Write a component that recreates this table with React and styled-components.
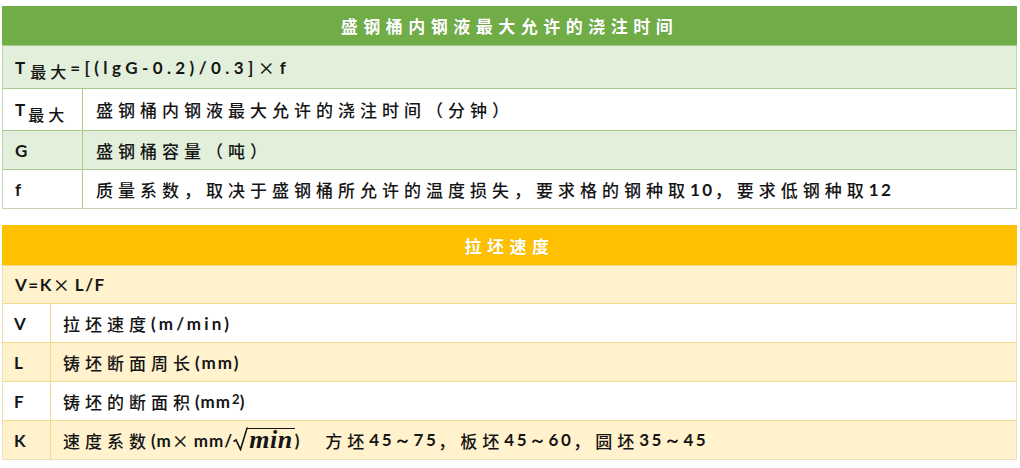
import React from "react";
import styled, { createGlobalStyle } from "styled-components";

const Global = createGlobalStyle`
  html, body { margin: 0; padding: 0; background: #ffffff; }
  body { font-family: "Noto Sans CJK SC", "Noto Sans", sans-serif; color: #151515; }
`;

const Page = styled.div`
  padding: 6px 0 0 2px;
  display: flex;
  flex-direction: column;
  gap: 16px;
  width: 1015px;
`;

const Table = styled.section`
  width: 1015px;
  box-sizing: border-box;
  border: 1px solid ${(p) => p.$outer};
  border-top: none;
  display: flex;
  flex-direction: column;
`;

const Title = styled.div`
  height: ${(p) => p.$h}px;
  background: ${(p) => p.$bg};
  color: #ffffff;
  display: flex;
  align-items: center;
  justify-content: center;
  font-size: 17px;
  font-weight: 700;
  letter-spacing: 5.5px;
  margin: 0 -1px;
  text-shadow: 0 0 1px rgba(0, 0, 0, 0.15);
`;

const Row = styled.div`
  display: grid;
  grid-template-columns: ${(p) => (p.$key ? `${p.$key}px 1fr` : "1fr")};
  height: ${(p) => p.$h}px;
  box-sizing: border-box;
  background: ${(p) => p.$bg};
  border-top: 1px solid ${(p) => p.$line};
  font-size: 17px;
  font-weight: 500;
  letter-spacing: 5px;
`;

const Cell = styled.div`
  display: flex;
  align-items: center;
  padding-left: ${(p) => p.$pad}px;
  white-space: nowrap;
  border-right: ${(p) => (p.$divider ? `1px solid ${p.$divider}` : "none")};
`;

const Lat = styled.span`
  font-family: "Lato", "Noto Sans", sans-serif;
  font-weight: 700;
  letter-spacing: ${(p) => (p.$ls != null ? p.$ls : 2)}px;
`;

const Sub = styled.span`
  font-size: 16px;
  position: relative;
  top: 4px;
  margin-left: 3px;
  letter-spacing: 4px;
`;

const Sup = styled.sup`
  font-family: "Lato", sans-serif;
  font-weight: 700;
  font-size: 13px;
  letter-spacing: 0;
  position: relative;
  top: -2px;
  margin-left: 1px;
`;

const Root = styled.span`
  display: inline-flex;
  align-items: flex-end;
  height: 26px;
  margin-top: -5px;
  letter-spacing: 0;
`;

const RadicalSvg = styled.svg`
  display: block;
  width: 15px;
  height: 24px;
`;

const Radicand = styled.span`
  font-family: "Liberation Serif", serif;
  font-style: italic;
  font-weight: 700;
  font-size: 26px;
  line-height: 22px;
  border-top: 1.5px solid #151515;
  padding: 0 2px 0 1px;
  letter-spacing: 0.5px;
`;

const Gap = styled.span`
  display: inline-block;
  width: ${(p) => p.$w}px;
`;

const green = {
  head: "#70AD47",
  band: "#E2EFDA",
  line: "#A9C98F",
  outer: "#C5D6B6",
};

const amber = {
  head: "#FFC000",
  band: "#FFF2CC",
  line: "#F2DB8E",
  outer: "#E9DFBC",
};

function Sqrt({ children }) {
  return (
    <Root>
      <RadicalSvg viewBox="0 0 15 24">
        <path
          d="M0.5 14.5 L3 13 L7.5 22.5 L14 1.2 L15 1.2"
          fill="none"
          stroke="#151515"
          strokeWidth="1.6"
          strokeLinejoin="miter"
        />
      </RadicalSvg>
      <Radicand>{children}</Radicand>
    </Root>
  );
}

export default function App() {
  return (
    <>
      <Global />
      <Page>
        <Table $outer={green.outer}>
          <Title $h={39} $bg={green.head}>盛钢桶内钢液最大允许的浇注时间</Title>
          <Row $h={43} $bg={green.band} $line={green.line}>
            <Cell $pad={12}>
              <Lat $ls={2}>T</Lat>
              <Sub>最大</Sub>
              <Lat $ls={4.4}>=[(lgG-0.2)/0.3]</Lat>
              <span>×</span>
              <Lat $ls={4}>f</Lat>
            </Cell>
          </Row>
          <Row $key={80} $h={42} $bg="#ffffff" $line={green.line}>
            <Cell $pad={12} $divider={green.line}>
              <Lat $ls={0}>T</Lat>
              <Sub>最大</Sub>
            </Cell>
            <Cell $pad={13}>盛钢桶内钢液最大允许的浇注时间（分钟）</Cell>
          </Row>
          <Row $key={80} $h={39} $bg={green.band} $line={green.line}>
            <Cell $pad={12} $divider={green.line}>
              <Lat>G</Lat>
            </Cell>
            <Cell $pad={13}>盛钢桶容量（吨）</Cell>
          </Row>
          <Row $key={80} $h={39} $bg="#ffffff" $line={green.line}>
            <Cell $pad={12} $divider={green.line}>
              <Lat>f</Lat>
            </Cell>
            <Cell $pad={13}>
              质量系数，取决于盛钢桶所允许的温度损失，要求格的钢种取<Lat $ls={2.5}>10</Lat>，要求低钢种取<Lat $ls={2.5}>12</Lat>
            </Cell>
          </Row>
        </Table>

        <Table $outer={amber.outer}>
          <Title $h={40} $bg={amber.head}>拉坯速度</Title>
          <Row $h={38} $bg={amber.band} $line={amber.line}>
            <Cell $pad={12}>
              <Lat $ls={1.5}>V=K</Lat>
              <span>×</span>
              <Lat $ls={1.5}>L/F</Lat>
            </Cell>
          </Row>
          <Row $key={48} $h={39} $bg="#ffffff" $line={amber.line}>
            <Cell $pad={11} $divider={amber.line}>
              <Lat>V</Lat>
            </Cell>
            <Cell $pad={12}>
              拉坯速度<Lat $ls={3.2}>(m/min)</Lat>
            </Cell>
          </Row>
          <Row $key={48} $h={39} $bg={amber.band} $line={amber.line}>
            <Cell $pad={11} $divider={amber.line}>
              <Lat>L</Lat>
            </Cell>
            <Cell $pad={12}>
              铸坯断面周长<Lat>(mm)</Lat>
            </Cell>
          </Row>
          <Row $key={48} $h={39} $bg="#ffffff" $line={amber.line}>
            <Cell $pad={11} $divider={amber.line}>
              <Lat>F</Lat>
            </Cell>
            <Cell $pad={12}>
              铸坯的断面积<Lat $ls={1}>(mm</Lat>
              <Sup>2</Sup>
              <Lat>)</Lat>
            </Cell>
          </Row>
          <Row $key={48} $h={39} $bg={amber.band} $line={amber.line}>
            <Cell $pad={11} $divider={amber.line}>
              <Lat>K</Lat>
            </Cell>
            <Cell $pad={12}>
              速度系数<Lat $ls={1}>(m</Lat>
              <span>×</span>
              <Lat $ls={1}>mm/</Lat>
              <Sqrt>min</Sqrt>
              <Lat $ls={0}>)</Lat>
              <Gap $w={26} />
              方坯<Lat $ls={2.5}>45～75</Lat>，板坯<Lat $ls={2.5}>45～60</Lat>，圆坯<Lat $ls={2.5}>35～45</Lat>
            </Cell>
          </Row>
        </Table>
      </Page>
    </>
  );
}
